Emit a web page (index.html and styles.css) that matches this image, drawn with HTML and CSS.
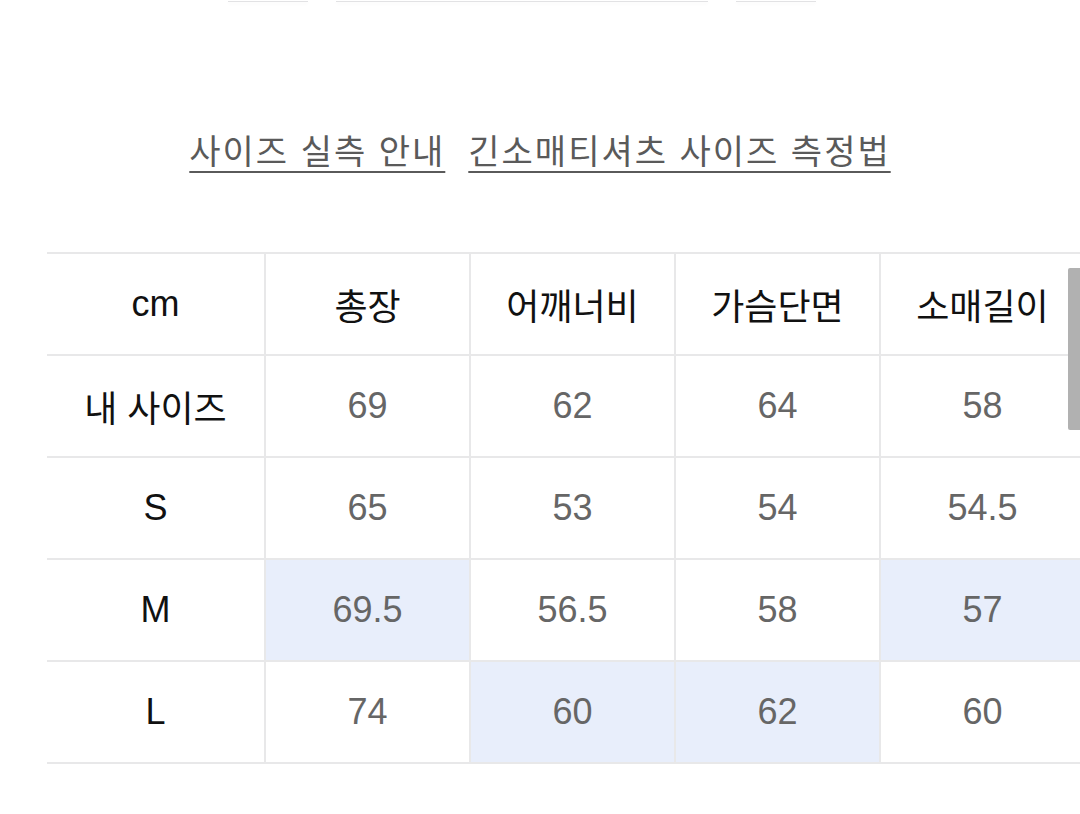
FILE: index.html
```html
<!DOCTYPE html>
<html lang="ko">
<head>
<meta charset="utf-8">
<link rel="stylesheet" href="styles.css">
</head>
<body>
<div class="top-strip">
  <div class="tab tab-short"></div>
  <div class="tab tab-long"></div>
  <div class="tab tab-short"></div>
</div>
<div class="links">
  <a class="link" href="#">사이즈 실측 안내</a>
  <a class="link" href="#">긴소매티셔츠 사이즈 측정법</a>
</div>
<div class="table-wrap">
  <table class="size-table">
    <colgroup>
      <col class="c-label">
      <col class="c-val">
      <col class="c-val">
      <col class="c-val">
      <col class="c-val">
    </colgroup>
    <thead>
      <tr>
        <th>cm</th><th>총장</th><th>어깨너비</th><th>가슴단면</th><th>소매길이</th>
      </tr>
    </thead>
    <tbody>
      <tr>
        <th>내 사이즈</th><td>69</td><td>62</td><td>64</td><td>58</td>
      </tr>
      <tr>
        <th>S</th><td>65</td><td>53</td><td>54</td><td>54.5</td>
      </tr>
      <tr>
        <th>M</th><td class="hl">69.5</td><td>56.5</td><td>58</td><td class="hl">57</td>
      </tr>
      <tr>
        <th>L</th><td>74</td><td class="hl">60</td><td class="hl">62</td><td>60</td>
      </tr>
    </tbody>
  </table>
  <div class="scrollbar"></div>
</div>
</body>
</html>
```
FILE: styles.css
```css
html, body {
  margin: 0;
  padding: 0;
  background: #ffffff;
}
body {
  width: 1080px;
  height: 814px;
  overflow: hidden;
  font-family: "Liberation Sans", "Noto Sans CJK KR", sans-serif;
}
.top-strip {
  display: flex;
  gap: 28px;
  padding-left: 228px;
  height: 2px;
}
.tab {
  height: 1px;
  border-bottom: 1px solid #e2e2e4;
  box-shadow: 0 2px 4px rgba(0,0,0,0.03);
}
.tab-short { width: 80px; }
.tab-long { width: 372px; }

.links {
  margin-top: 128px;
  display: flex;
  justify-content: center;
  gap: 23px;
  height: 40px;
  line-height: 40px;
}
.link {
  font-family: "Noto Sans CJK KR", sans-serif;
  font-size: 34px;
  color: #5a5a5a;
  text-decoration: underline;
  text-decoration-thickness: 2px;
  text-underline-offset: 7px;
  letter-spacing: 2px;
}
.table-wrap {
  position: relative;
  margin-top: 82px;
  width: 1080px;
  overflow: hidden;
}
.size-table {
  border-collapse: collapse;
  table-layout: fixed;
  width: 1038px;
  margin-left: 47px;
}
.c-label { width: 218px; }
.c-val { width: 205px; }
.size-table th,
.size-table td {
  border: 2px solid #e8e8e9;
  height: 100px;
  padding: 0;
  text-align: center;
  vertical-align: middle;
  font-size: 36px;
  font-weight: 400;
}
.size-table tr > :first-child {
  border-left: none;
}
.size-table th {
  color: #111111;
}
.size-table td {
  color: #666666;
}
.size-table td.hl {
  background: #e8eefb;
}
.scrollbar {
  position: absolute;
  right: 0;
  top: 16px;
  width: 12px;
  height: 162px;
  background: #b1b1b1;
  border-radius: 2px 0 0 2px;
}
```
